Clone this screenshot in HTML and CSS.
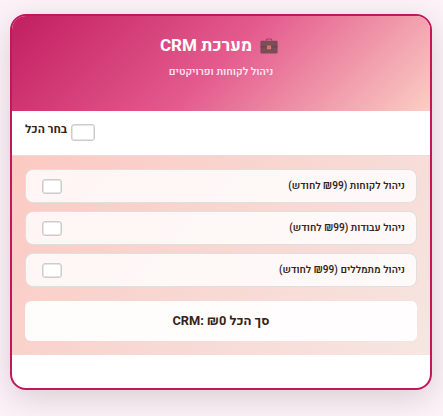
FILE: index.html
```html
<!DOCTYPE html>
<html lang="he" dir="rtl">
<head>
<meta charset="utf-8">
<title>מערכת CRM</title>
<link rel="stylesheet" href="styles.css">
</head>
<body>
<section class="card">
  <header class="card-header">
    <h1 class="title">
      <svg class="briefcase" viewBox="0 0 18 16" aria-hidden="true">
        <path d="M6.4 2.8V1.9Q6.4 1 7.3 1h3.4q.9 0 .9.9v.9" fill="none" stroke="#8d4c5c" stroke-width="1.1"/>
        <rect x=".4" y="2.8" width="17.2" height="12.6" rx=".8" fill="#7c4c5a"/>
        <path d="M.4 8.8h17.2" stroke="#623c4c" stroke-width=".8"/>
        <rect x="6.9" y="7.4" width="4.2" height="3.8" rx=".4" fill="#d77d62"/>
        <path d="M7.6 9h2.8" stroke="#b96a58" stroke-width=".8"/>
      </svg>
      <span>מערכת CRM</span>
    </h1>
    <p class="subtitle">ניהול לקוחות ופרויקטים</p>
  </header>
  <div class="select-all">
    <span class="box box-large"></span>
    <span class="select-label">בחר הכל</span>
  </div>
  <div class="services">
    <div class="item"><span>ניהול לקוחות (₪99 לחודש)</span><span class="box"></span></div>
    <div class="item"><span>ניהול עבודות (₪99 לחודש)</span><span class="box"></span></div>
    <div class="item"><span>ניהול מתמללים (₪99 לחודש)</span><span class="box"></span></div>
    <div class="total">סך הכל CRM: ₪0</div>
  </div>
</section>
</body>
</html>
```
FILE: styles.css
```css
* { box-sizing: border-box; }
body {
  margin: 0;
  height: 416px;
  padding: 14px 11px 0 10px;
  overflow: hidden;
  background: #fdf2f7;
  font-family: Heebo, Roboto, "Open Sans", "Noto Sans", sans-serif;
  color: #35261c;
}
.card {
  height: 376px;
  border: 2px solid #c2185b;
  border-radius: 16px;
  overflow: hidden;
  background: #fff;
  box-shadow: 0 8px 32px rgba(0, 0, 0, .15);
}
.card-header {
  height: 95px;
  padding-top: 15px;
  background: linear-gradient(135deg, #c21f60 0%, #e45b8e 50%, #fbcfc4 100%);
  color: #fff;
  text-align: center;
}
.title {
  display: flex;
  justify-content: center;
  align-items: center;
  gap: 8px;
  height: 28px;
  margin: 0;
  padding-left: 2px;
  padding-right: 6px;
  font-size: 17.1px;
  font-weight: 700;
}
.briefcase { width: 18px; height: 16px; margin-top: 2px; }
.subtitle {
  margin: 5px 0 0;
  font-size: 10.4px;
  font-weight: 600;
  line-height: 16px;
  opacity: .85;
}
.select-all {
  display: flex;
  justify-content: flex-end;
  gap: 4px;
  height: 45px;
  padding: 12px 13px 0;
  border-bottom: 1px solid #e6dddc;
}
.select-label {
  font-size: 11.6px;
  font-weight: 700;
  line-height: 13px;
}
.box {
  width: 20px;
  height: 15px;
  border: 1px solid #ccc;
  border-radius: 3px;
  background: #fff;
  box-shadow: inset 0 0 0 .5px #ccc;
}
.box-large { width: 24px; height: 17px; margin-top: 1px; }
.services {
  height: 199px;
  padding: 13px 13px 14px;
  background: linear-gradient(135deg, #fbc9c2, #f6e6e2);
}
.item {
  display: flex;
  justify-content: space-between;
  align-items: center;
  height: 34px;
  margin-bottom: 8px;
  padding: 0 11px 1px 16px;
  border: 1px solid #e0dfdf;
  border-radius: 8px;
  background: rgba(255, 255, 255, .82);
  font-size: 10.1px;
  font-weight: 600;
}
.item .box { margin-top: 1px; }
.total {
  height: 40px;
  margin-top: 14px;
  border-radius: 6px;
  background: rgba(255, 255, 255, .93);
  font-size: 12.8px;
  font-weight: 700;
  line-height: 40px;
  text-align: center;
}
```
